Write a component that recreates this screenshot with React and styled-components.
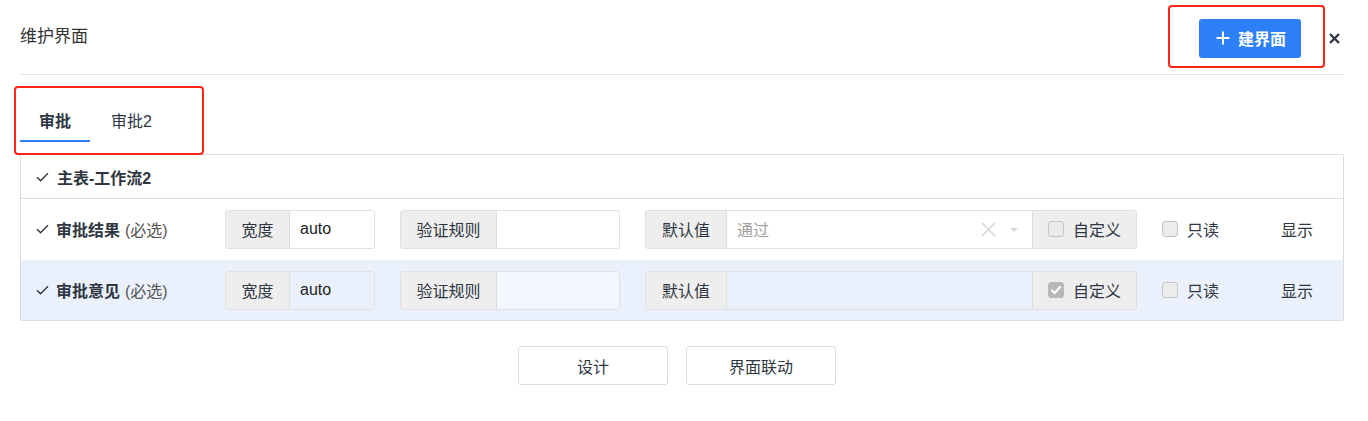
import React from "react";
import styled, { createGlobalStyle } from "styled-components";

const GlobalStyle = createGlobalStyle`
  html, body {
    margin: 0;
    padding: 0;
    background: #fff;
  }
  body {
    font-family: "Liberation Sans", "Noto Sans CJK SC", sans-serif;
    font-size: 16px;
    color: #303641;
  }
`;

const CheckMark = ({ color = "#303641" }) => (
  <svg width="13" height="10" viewBox="0 0 13 10">
    <path d="M1 5.2 L4.6 8.8 L12 1.2" fill="none" stroke={color} strokeWidth="1.4" />
  </svg>
);

const fields = [
  { name: "审批结果", width: "auto", value: "通过", custom: false, alt: false },
  { name: "审批意见", width: "auto", value: "", custom: true, alt: true },
];

const App = () => {
  return (
    <Page>
      <GlobalStyle />
      <Header>
        <Title>维护界面</Title>
        <HeaderRight>
          <Highlight>
            <PrimaryButton>
              <svg width="14" height="14" viewBox="0 0 14 14">
                <path d="M7 0.5 V13.5 M0.5 7 H13.5" stroke="#fff" strokeWidth="2" />
              </svg>
              建界面
            </PrimaryButton>
          </Highlight>
          <Close>
            <svg width="11" height="11" viewBox="0 0 11 11">
              <path d="M1 1 L10 10 M10 1 L1 10" stroke="#303846" strokeWidth="2.4" />
            </svg>
          </Close>
        </HeaderRight>
      </Header>

      <Tabs>
        <TabMark />
        <Tab active>审批</Tab>
        <Tab>审批2</Tab>
      </Tabs>

      <Panel>
        <HeadRow>
          <CheckMark />
          <strong>主表-工作流2</strong>
        </HeadRow>
        {fields.map((f) => (
          <Row key={f.name} alt={f.alt}>
            <NameCell>
              <CheckMark />
              <strong>{f.name}</strong>
              <Hint>(必选)</Hint>
            </NameCell>

            <Group $w={150}>
              <Addon $w={64}>宽度</Addon>
              <Field $bg={f.alt ? "#eaf1fc" : "#fff"}>{f.width}</Field>
            </Group>

            <Group $w={220}>
              <Addon $w={96}>验证规则</Addon>
              <Field $bg={f.alt ? "#f4f8fe" : "#fff"} />
            </Group>

            <Group $w={492}>
              <Addon $w={81}>默认值</Addon>
              <SelectField $bg={f.alt ? "transparent" : "#fff"}>
                <Placeholder>{f.value}</Placeholder>
                {f.value && (
                  <>
                    <svg width="15" height="15" viewBox="0 0 15 15">
                      <path d="M1 1 L14 14 M14 1 L1 14" stroke="#d0d0d0" strokeWidth="1.3" />
                    </svg>
                    <Caret />
                  </>
                )}
              </SelectField>
              <AddonRight>
                <Box checked={f.custom}>
                  {f.custom && (
                    <svg width="12" height="10" viewBox="0 0 12 10">
                      <path d="M1.5 5 L4.7 8 L10.5 1.5" fill="none" stroke="#fff" strokeWidth="2.2" />
                    </svg>
                  )}
                </Box>
                自定义
              </AddonRight>
            </Group>

            <ReadOnly>
              <Box />
              只读
            </ReadOnly>
            <Shown>显示</Shown>
          </Row>
        ))}
      </Panel>

      <Footer>
        <Button>设计</Button>
        <Button>界面联动</Button>
      </Footer>
    </Page>
  );
};

export default App;

const Page = styled.div`
  padding: 0 24px 40px 20px;
`;

const Header = styled.div`
  height: 74px;
  display: flex;
  align-items: center;
  justify-content: space-between;
  border-bottom: 1px solid #e3e3e3;
`;

const Title = styled.div`
  font-size: 17px;
  line-height: 20px;
  color: #333;
  margin-top: 0;
`;

const HeaderRight = styled.div`
  display: flex;
  align-items: center;
  margin-right: 4px;
`;

const Highlight = styled.div`
  border: 2px solid #ff2418;
  border-radius: 4px;
  padding: 12px 22px 8px 29px;
  margin-top: -2px;
`;

const PrimaryButton = styled.button`
  width: 102px;
  height: 39px;
  border: 0;
  border-radius: 3px;
  background: #2e80f8;
  color: #fff;
  font-family: inherit;
  font-size: 16px;
  font-weight: bold;
  display: flex;
  align-items: center;
  justify-content: center;
  gap: 8px;
  padding: 0 0 0 2px;
`;

const Close = styled.div`
  display: flex;
  margin-left: 4px;
  padding-top: 2px;
`;

const Tabs = styled.div`
  position: relative;
  display: flex;
  align-items: flex-end;
  height: 67px;
  margin-bottom: 12px;
`;

const TabMark = styled.div`
  position: absolute;
  left: -6px;
  top: 11px;
  width: 186px;
  height: 65px;
  border: 2px solid #ff2418;
  border-radius: 4px;
  z-index: 2;
  pointer-events: none;
`;

const Tab = styled.div`
  padding: 16px 19px 0;
  height: 46px;
  line-height: 20px;
  font-size: 16px;
  margin-right: 2px;
  box-sizing: border-box;
  font-weight: ${(p) => (p.active ? "bold" : "normal")};
  border-bottom: 2px solid ${(p) => (p.active ? "#2e80f8" : "transparent")};
`;

const Panel = styled.div`
  border: 1px solid #dcdcdc;
  border-radius: 2px;
`;

const HeadRow = styled.div`
  height: 43px;
  display: flex;
  align-items: center;
  gap: 8px;
  padding-left: 15px;
  border-bottom: 1px solid #dcdcdc;
  font-size: 16px;
`;

const Row = styled.div`
  height: 60px;
  display: flex;
  align-items: center;
  padding-left: 15px;
  background: ${(p) => (p.alt ? "#ebf1fc" : "#fff")};
  border-top: ${(p) => (p.alt ? "1px solid #fff" : "0")};
`;

const NameCell = styled.div`
  width: 189px;
  display: flex;
  align-items: center;
  gap: 7px;
  white-space: nowrap;
`;

const Hint = styled.span`
  color: #555;
  margin-left: -2px;
`;

const Group = styled.div`
  width: ${(p) => p.$w}px;
  height: 39px;
  margin-right: 25px;
  display: flex;
  border: 1px solid #e0e0e0;
  border-radius: 3px;
  box-sizing: border-box;
  overflow: hidden;
`;

const Addon = styled.div`
  width: ${(p) => p.$w - 1}px;
  flex: none;
  background: #eeeeee;
  border-right: 1px solid #dedede;
  display: flex;
  align-items: center;
  justify-content: center;
  color: #303641;
`;

const Field = styled.div`
  flex: 1;
  background: ${(p) => p.$bg};
  display: flex;
  align-items: center;
  padding-left: 10px;
  color: #222;
`;

const SelectField = styled.div`
  width: 305px;
  flex: none;
  background: ${(p) => p.$bg};
  display: flex;
  align-items: center;
  padding: 0 14px 0 10px;
  box-sizing: border-box;
  gap: 14px;
`;

const Placeholder = styled.span`
  flex: 1;
  color: #a0a0a0;
`;

const Caret = styled.span`
  width: 0;
  height: 0;
  border-left: 4px solid transparent;
  border-right: 4px solid transparent;
  border-top: 4px solid #d8d8d8;
  margin-top: 2px;
`;

const AddonRight = styled.div`
  flex: 1;
  background: #eeeeee;
  border-left: 1px solid #dedede;
  display: flex;
  align-items: center;
  padding-left: 15px;
  gap: 9px;
`;

const Box = styled.span`
  width: 16px;
  height: 16px;
  box-sizing: border-box;
  border-radius: 3px;
  border: 1px solid ${(p) => (p.checked ? "#b8b8b8" : "#c4c4c4")};
  background: ${(p) => (p.checked ? "#b8b8b8" : "#ececec")};
  display: flex;
  align-items: center;
  justify-content: center;
  flex: none;
`;

const ReadOnly = styled.div`
  width: 119px;
  display: flex;
  align-items: center;
  gap: 9px;
`;

const Shown = styled.div`
  color: #303641;
`;

const Footer = styled.div`
  display: flex;
  justify-content: center;
  gap: 18px;
  margin-top: 25px;
  padding-right: 10px;
`;

const Button = styled.button`
  width: 150px;
  height: 39px;
  background: #fff;
  border: 1px solid #dcdcdc;
  border-radius: 3px;
  font-family: inherit;
  font-size: 16px;
  color: #303641;
`;
